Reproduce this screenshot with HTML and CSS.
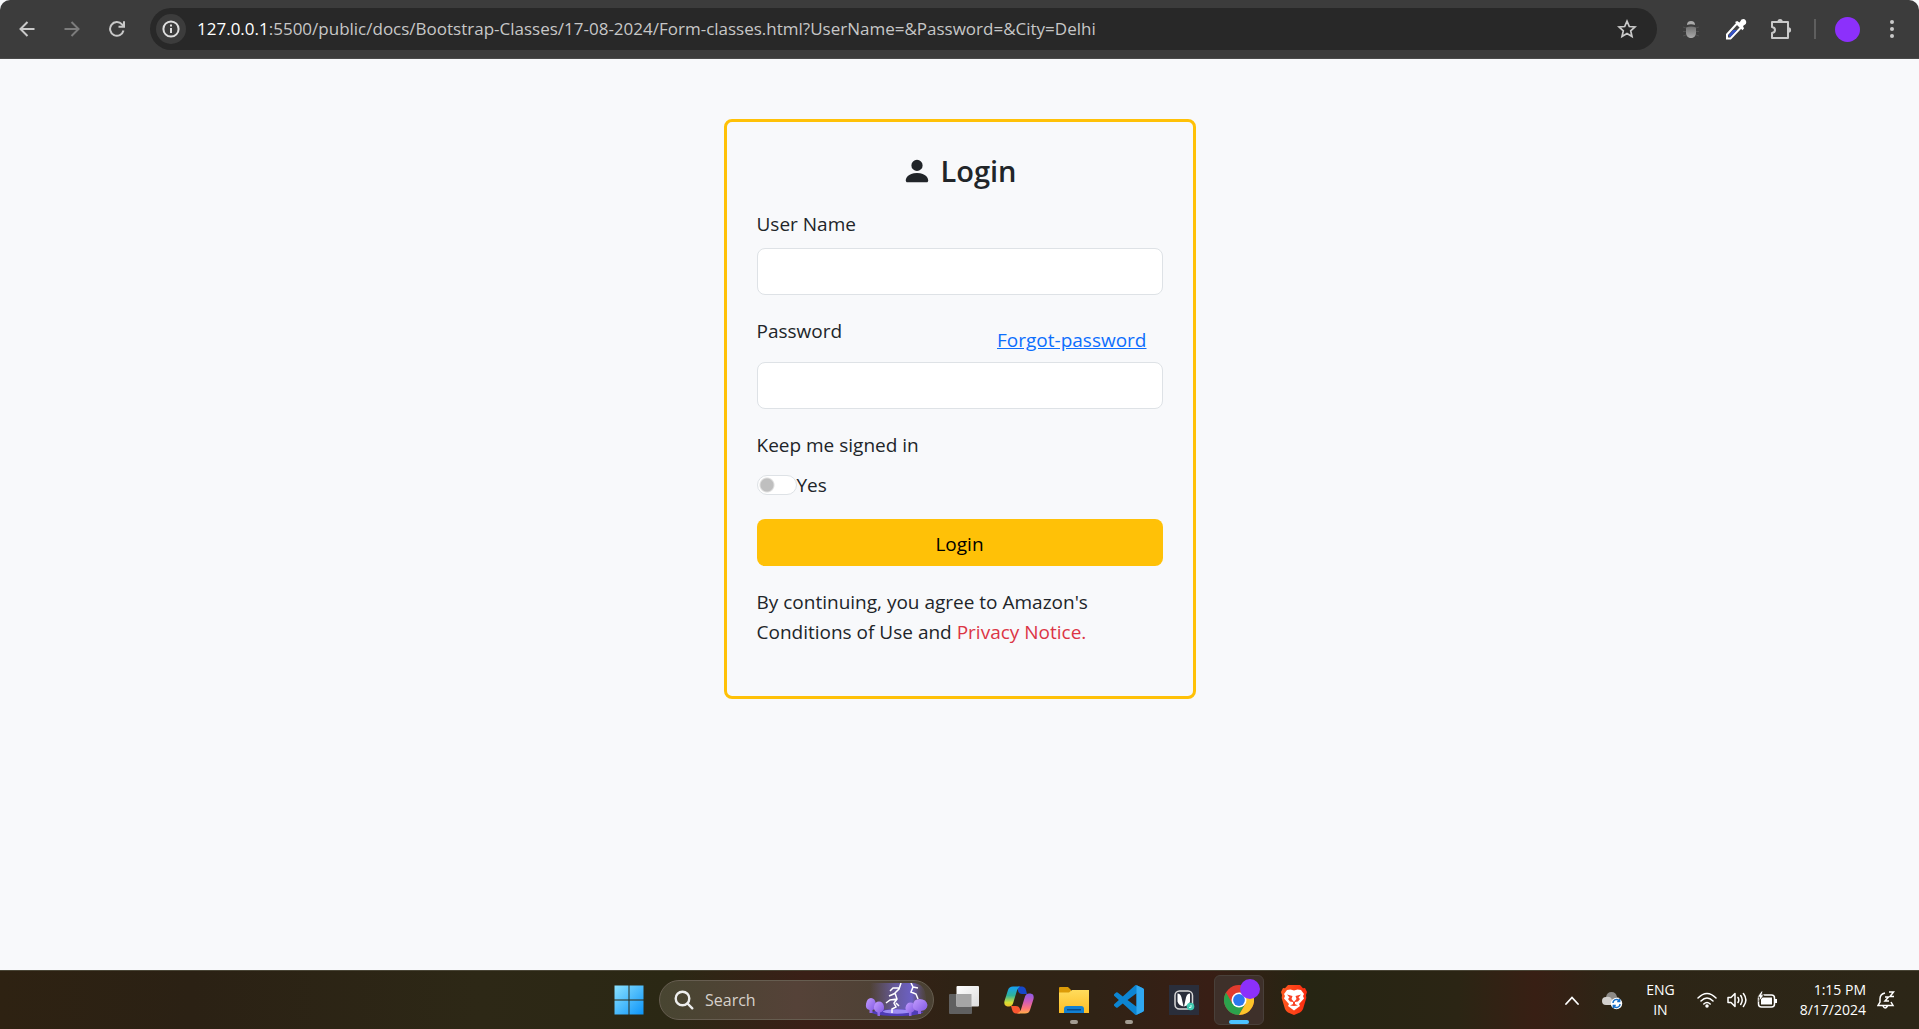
FILE: index.html
```html
<!DOCTYPE html>
<html lang="en">
<head>
<meta charset="utf-8">
<meta name="viewport" content="width=device-width, initial-scale=1">
<title>Form-classes</title>
<link rel="stylesheet" href="styles.css">
</head>
<body>
<header class="toolbar">
  <nav class="nav-buttons" aria-label="Navigation">
    <button class="icon-button" aria-label="Back"><svg width="16" height="16" viewBox="0 0 16 16" fill="none" stroke="#c9c9c9" stroke-width="2"><path d="M15.500 8H2M8.500 1L1.500 8l7 7"/></svg></button>
    <button class="icon-button" aria-label="Forward"><svg width="16" height="16" viewBox="0 0 16 16" fill="none" stroke="#7c7c7c" stroke-width="2"><path d="M.5 8H14M7.500 1l7 7-7 7"/></svg></button>
    <button class="icon-button" aria-label="Reload"><svg width="16" height="16" viewBox="0 0 16 16" fill="none" stroke="#c9c9c9" stroke-width="2"><path d="M14.500 9.500A6.800 6.800 0 1 1 13 3.400L15 5.600M15 .3v5.500H9.500"/></svg></button>
  </nav>
  <div class="address">
    <button class="site-info" aria-label="Site information"><svg width="18" height="18" viewBox="0 0 18 18" fill="none" stroke="#dedede" stroke-width="2"><circle cx="9" cy="9" r="7.600"/><path d="M9 8v5M9 4.600v2"/></svg></button>
    <div class="url"><span class="url-host">127.0.0.1</span>:5500/public/docs/Bootstrap-Classes/17-08-2024/Form-classes.html?UserName=&amp;Password=&amp;City=Delhi</div>
    <button class="icon-button" aria-label="Bookmark"><svg width="20" height="20" viewBox="0 0 20 20" fill="none" stroke="#c9c9c9" stroke-width="1.700"><path d="M10 2.200l2.300 5.300 5.700.5-4.300 3.800 1.300 5.700-5-3-5 3 1.300-5.700L2 8l5.700-.5z"/></svg></button>
  </div>
  <div class="extensions">
    <button class="icon-button" aria-label="Bug extension"><svg width="18" height="20" viewBox="0 0 18 20"><defs><linearGradient id="bug" x2="0" y2="1"><stop stop-color="#707070"/><stop offset="1" stop-color="#aaa"/></linearGradient></defs><path d="M1 8l3 1M1 12.500h3M1 17l3-1M17 8l-3 1M17 12.500h-3M17 17l-3-1" stroke="#505050"/><path d="M5 6q0-4 4-4t4 4q-4-1.600-8 0z" fill="#aaa"/><path d="M4 8.500q5-2 10 0v5c0 4-2.500 5.500-5 5.500s-5-1.500-5-5.500z" fill="url(#bug)"/></svg></button>
    <button class="icon-button" aria-label="Color picker"><svg width="22" height="22" viewBox="0 0 22 22"><path d="M2 20.500v-4L12 5.500l4 4-10.500 11z" fill="#454545" stroke="#fff" stroke-width="2"/><path d="M3.500 17.500l4.500-5.500h4l-7 7.500z" fill="#3552c9"/><path d="M10 4l2.200-1 2.300 1.500 2-3Q19 .2 20.500 2t.3 4L18 8l1 2.500-1.600 1.700z" fill="#fff"/></svg></button>
    <button class="icon-button" aria-label="Extensions"><svg width="22" height="22" viewBox="0 0 22 22"><path d="M2 4h16v16H2v-5q3-.5 3-3T2 9z" fill="none" stroke="#c9c9c9" stroke-width="2" stroke-linejoin="round"/><path d="M7.500 3.500a2.600 2.600 0 0 1 5.200 0zM18.500 9.300a2.600 2.600 0 0 1 0 5.200z" fill="#c9c9c9"/></svg></button>
    <span class="divider"></span>
    <button class="avatar" aria-label="Profile"></button>
    <button class="icon-button" aria-label="Menu"><svg width="6" height="20" viewBox="0 0 6 20" fill="#c9c9c9"><circle cx="3" cy="3" r="2"/><circle cx="3" cy="10" r="2"/><circle cx="3" cy="17" r="2"/></svg></button>
  </div>
</header>

<main class="page">
  <form class="login-card">
    <h1 class="title"><svg width="30" height="30" viewBox="0 0 16 16" fill="currentColor"><path d="M3 14s-1 0-1-1 1-4 6-4 6 3 6 4-1 1-1 1zm5-6a3 3 0 1 0 0-6 3 3 0 0 0 0 6"/></svg>Login</h1>
    <div class="field">
      <label class="label" for="username">User Name</label>
      <input class="input" id="username" name="UserName" type="text">
    </div>
    <div class="field">
      <div class="label-row">
        <label for="password">Password</label>
        <a class="forgot" href="#">Forgot-password</a>
      </div>
      <input class="input" id="password" name="Password" type="password">
    </div>
    <fieldset class="keep">
      <legend>Keep me signed in</legend>
      <div class="switch-row">
        <input class="switch" id="keep" type="checkbox" role="switch">
        <label for="keep">Yes</label>
      </div>
    </fieldset>
    <button class="submit" type="submit">Login</button>
    <p class="terms">By continuing, you agree to Amazon's Conditions of Use and <a class="privacy" href="#">Privacy Notice.</a></p>
  </form>
</main>

<footer class="taskbar">
  <div class="apps">
    <button class="app" aria-label="Start"><svg width="30" height="30" viewBox="0 0 30 30"><defs><linearGradient id="win" x2="1" y2="1"><stop stop-color="#8be2ff"/><stop offset="1" stop-color="#0c94f8"/></linearGradient></defs><path d="M0 0h14v14H0zM15 0h14v14H15zM0 15h14v14H0zM15 15h14v14H15z" transform="translate(.5 .5)" fill="url(#win)"/></svg></button>
    <label class="search">
      <svg width="20" height="20" viewBox="0 0 20 20" fill="none" stroke="#eee" stroke-width="2.400" stroke-linecap="round"><circle cx="8.500" cy="8.500" r="6.800"/><path d="M13.500 13.500l4.800 4.800"/></svg>
      <input class="search-input" type="text" placeholder="Search" aria-label="Search">
      <svg class="highlight" width="64" height="34" viewBox="0 0 64 34"><defs><linearGradient id="sky"><stop stop-color="#6a5c90" stop-opacity="0"/><stop offset=".45" stop-color="#665a9c"/><stop offset=".75" stop-color="#6c60c4"/><stop offset="1" stop-color="#5a4b65" stop-opacity=".2"/></linearGradient><linearGradient id="tree" x2="1" y2="1"><stop stop-color="#c39cff"/><stop offset="1" stop-color="#7a52de"/></linearGradient></defs><path d="M5 0h48q7 4 8 14v14H5z" fill="url(#sky)"/><path d="M5 29q13-3 27-3t27 3q-6 4-27 4T5 29z" fill="#4f3cb8"/><ellipse cx="32" cy="28.500" rx="14" ry="2.200" fill="#9d8cf4"/><g fill="url(#tree)"><path d="M4.500 30v-3Q0 26 1 21q1-6 5-6t5 6q1 5-3.500 6v3z"/><path d="M12.500 33v-3.500q-4-1.500-3.500-6 1-5 5-5t5 5q.5 5-4 6V33z"/><path d="M44 33v-3.500q-4-1-3.500-5 1-5 5-5t4.500 5q0 4-3.500 5V33z"/><path d="M53 31v-3q-6-1-5-6 .5-6 6.500-6 7 0 8 6 0 5-6.500 6v3z"/></g><path d="M36 0l-2 6-4 4 2 6-3 4 2 4-4 2v4M34 5l-6 0-3 3M31 10l-7 3M32 16l-7 1-4 3M31 20l3 3M46 0l2 4-2 5 5 2 2 5M48 4l5 1" fill="none" stroke="#fff" stroke-width="1.500"/></svg>
    </label>
    <button class="app" aria-label="Task view"><svg width="30" height="30" viewBox="0 0 30 30"><defs><linearGradient id="tv" x2="1" y2="1"><stop stop-color="#fff"/><stop offset="1" stop-color="#ddd"/></linearGradient></defs><rect y="9" width="23" height="20" rx="1" fill="#606060"/><rect x="7.500" y="1" width="22.500" height="20.500" rx="1" fill="url(#tv)"/><path d="M7.500 9H22.500v12.500H7.500z" fill="#a6a6a6"/></svg></button>
    <button class="app" aria-label="Copilot"><svg width="30" height="28" viewBox="0 0 30 28"><defs><linearGradient id="cp1" x2="0" y2="1"><stop stop-color="#16a0f5"/><stop offset=".45" stop-color="#2fb29b"/><stop offset=".8" stop-color="#d5df35"/><stop offset="1" stop-color="#f0be28"/></linearGradient><linearGradient id="cp2" x2="0" y2="1"><stop stop-color="#8a5ce8"/><stop offset=".4" stop-color="#d05cb8"/><stop offset=".75" stop-color="#ff7878"/><stop offset="1" stop-color="#ffad4a"/></linearGradient></defs><path d="M14 .5h4q3 0 4 3.500l1 4h-5q-3 0-4-3z" fill="#1648ca"/><path d="M9 .5h7q-2 1-3 4l-4 13q-1 3-4 3H3.500Q-.5 20 .5 15L4 4Q5 .5 9 .5z" fill="url(#cp1)"/><path d="M16 27.500h-4q-3 0-4-4L7 20h5q3 0 4 3z" fill="#fa5630"/><path d="M21 27.500h-8q3-1 4-4l4-13q1-3 4-3h1.500q4 .5 3 5.500L26 24q-1 3.500-5 3.500z" fill="url(#cp2)"/></svg></button>
    <button class="app app-open" aria-label="File Explorer"><svg width="30" height="28" viewBox="0 0 30 28"><defs><linearGradient id="fd" x2="0" y2="1"><stop stop-color="#ffdc5c"/><stop offset="1" stop-color="#fdbd25"/></linearGradient></defs><path d="M0 2q0-1 1-1h8l3 3v5H0z" fill="#dc9b08"/><path d="M0 6.500h10L13 4h17v23H0z" fill="url(#fd)"/><path d="M5 27v-4q0-3 3-3h14q3 0 3 3v4z" fill="#1280d2"/><rect x="8" y="23" width="14" height="1.500" fill="#064b89"/></svg></button>
    <button class="app app-open" aria-label="Visual Studio Code"><svg width="30" height="30" viewBox="0 0 24 24"><path fill="#0d85d2" d="M23.150 2.587L18.210.21a1.494 1.494 0 0 0-1.705.29l-9.460 8.630-4.120-3.128a.999.999 0 0 0-1.276.057L.327 7.261A1 1 0 0 0 .326 8.740L3.899 12 .326 15.260a1 1 0 0 0 .001 1.479L1.650 17.940a.999.999 0 0 0 1.276.057l4.120-3.128 9.460 8.630a1.492 1.492 0 0 0 1.704.29l4.942-2.377A1.500 1.500 0 0 0 24 20.060V3.939a1.500 1.500 0 0 0-.85-1.352zm-5.146 14.861L10.826 12l7.178-5.448v10.896z"/><path fill="#30a8f0" d="M18 .2l5.150 2.387A1.500 1.500 0 0 1 24 3.939V20.060a1.500 1.500 0 0 1-.85 1.352L18 23.800z"/></svg></button>
    <button class="app" aria-label="Capture tool"><svg width="30" height="30" viewBox="0 0 30 30"><path d="M0 0h30v30H0z" fill="#2a2e3b"/><rect x="6" y="6" width="17.500" height="18" rx="4.500" fill="none" stroke="#d8d8d8" stroke-width="1.500"/><path d="M8.500 8.500q3 0 4 4l2 9q-5-1-6-5zM21 8.500q-3 0-4 4l-2 9q5-1 6-5z" fill="#fff"/><circle cx="21.500" cy="21.500" r="3.800" fill="#3fc9b0"/><path d="M20 22.500h2v-2.500" fill="none" stroke="#d5fff5"/></svg></button>
    <button class="app app-active" aria-label="Google Chrome"><svg width="30" height="30" viewBox="0 0 30 30"><circle cx="15" cy="15" r="15" fill="#e33b2e"/><path d="M2 7.500A15 15 0 0 0 15 30l6.500-11.300L15 15l-6.500 3.700z" fill="#2ba24c"/><path d="M28 7.500A15 15 0 0 1 15 30l6.500-11.300L15 7.500z" fill="#fcc42a"/><circle cx="15" cy="15" r="7.500" fill="#fff"/><circle cx="15" cy="15" r="5.900" fill="#2b78ee"/></svg><span class="badge"></span></button>
    <button class="app" aria-label="Brave"><svg width="26" height="30" viewBox="0 0 26 30"><defs><linearGradient id="brave"><stop stop-color="#ff5a20"/><stop offset="1" stop-color="#fa2a10"/></linearGradient></defs><path d="M7 0h12l3 3.200 2-.2 2 4-1 3 .3 3-3.300 11q-1 2-3 3.500L13 30l-6-2.500Q5 26 4 24L.7 13 1 10 0 7l2-4 2 .2z" fill="url(#brave)"/><path d="M9.500 4.500L13 5.500l3.500-1L20 5l3 4-1 2 1 2.500-5 5.500 1 2-2 1.500-4 3-4-3L7 21l1-2-5-5.500L4 11 3 9l3-4z" fill="#fff"/><path d="M6 9.500l5.500 1.500-1 3 2.500 3 2.500-3-1-3L20 9.500l-2.500 3L19 14l-2 2.500-3 .5v2l3 1.500-4 .5-4-.5 3-1.500v-2l-3-.5L7 14l1.500-1.500z" fill="#fa4427"/></svg></button>
  </div>
  <div class="tray">
    <svg width="14" height="9" viewBox="0 0 14 9" fill="none" stroke="#fff" stroke-width="1.800" stroke-linecap="round"><path d="M1 8l6-6.500L13 8"/></svg>
    <svg class="cloud" width="22" height="20" viewBox="0 0 22 20"><path d="M5 7q1-5 5.500-5T16 7q3 0 3 4l-4 2H5z" fill="#8c8a86"/><path d="M5 15q-4 0-4-4t4-4q5-1 6 3l1 5z" fill="#d2d0cd"/><circle cx="15.500" cy="13.500" r="5.700" fill="#fff"/><path d="M12 13a3.600 3.600 0 0 1 6.500-2M18.700 9v2.500h-2.500M19 14a3.600 3.600 0 0 1-6.500 2M12.300 18v-2.500h2.500" fill="none" stroke="#1771c9" stroke-width="1.400"/></svg>
    <div class="language"><span>ENG</span><span>IN</span></div>
    <div class="status">
      <svg width="20" height="16" viewBox="0 0 20 16" fill="none" stroke="#fff" stroke-width="1.500" stroke-linecap="round"><path d="M1 6q9-9 18 0M4 9q6-6 12 0M6.800 12q3.200-3 6.400 0"/><circle cx="10" cy="14" r="1" fill="#fff"/></svg>
      <svg width="20" height="16" viewBox="0 0 20 16" fill="none" stroke="#fff" stroke-width="1.500" stroke-linecap="round" stroke-linejoin="round"><path d="M1 5.500h3l4-4v13l-4-4H1zM11 5.500q1.600 2.500 0 5M13.700 3.500q3 4.500 0 9M16.400 1.500q5 6.500 0 13"/></svg>
      <svg width="20" height="18" viewBox="0 0 20 18"><rect x="1.500" y="4" width="16" height="12" rx="3" fill="none" stroke="#fff" stroke-width="1.500"/><path d="M4 6.500h11v7H4z" fill="#fff"/><path d="M18 8h2v4h-2z" fill="#fff"/><path d="M4.500 0L.3 6h2.200L2 10.500 7 4H4.800L6 0z" fill="#fff" stroke="#2c2617" stroke-width=".8"/></svg>
    </div>
    <div class="clock"><time>1:15 PM</time><time>8/17/2024</time></div>
    <svg width="18" height="20" viewBox="0 0 18 20" fill="none" stroke="#fff" stroke-width="1.500"><path d="M8 3Q3 4 3 9v3l-2 3.500h15L14 12M6 16q2 4 4.500 0M8 7h3.500L8 11h4M12 2h4.500L13 6.500h4"/></svg>
  </div>
</footer>
</body>
</html>
```
FILE: styles.css
```css
* {
  box-sizing: border-box;
}

body {
  margin: 0;
  min-height: 100vh;
  display: flex;
  flex-direction: column;
  background: #f8f9fb;
  color: #212529;
  font-family: "Open Sans", "Noto Sans", sans-serif;
  font-size: 19px;
  line-height: 30px;
}

button,
input {
  font: inherit;
  margin: 0;
}

svg {
  display: block;
  flex: none;
}

/* Browser toolbar */

.toolbar {
  display: flex;
  align-items: center;
  height: 59px;
  padding: 0 12px;
  background: #3c3c3c;
  border-bottom: 1px solid #4a4a4a;
  border-radius: 10px 10px 0 0;
}

.nav-buttons {
  display: flex;
  gap: 15px;
  margin-right: 18px;
}

.icon-button {
  display: flex;
  align-items: center;
  justify-content: center;
  width: 30px;
  height: 30px;
  padding: 0;
  border: 0;
  background: none;
}

.address {
  flex: 1;
  display: flex;
  align-items: center;
  height: 42px;
  padding: 0 15px 0 6px;
  border-radius: 21px;
  background: #282828;
}

.site-info {
  display: flex;
  align-items: center;
  justify-content: center;
  width: 30px;
  height: 30px;
  padding: 0;
  border: 0;
  border-radius: 50%;
  background: #3c3c3c;
}

.url {
  flex: 1;
  margin-left: 11px;
  color: #c7c7c7;
  font-size: 17px;
  white-space: nowrap;
}

.url-host {
  color: #fff;
}

.extensions {
  display: flex;
  align-items: center;
  gap: 15px;
  margin-left: 19px;
}

.divider {
  width: 2px;
  height: 20px;
  margin: 0 4px 0 3px;
  background: #5e5e5e;
}

.avatar {
  width: 25px;
  height: 25px;
  margin-right: 2px;
  padding: 0;
  border: 0;
  border-radius: 50%;
  background: #8c30fb;
}

/* Login page */

.page {
  flex: 1;
  padding: 60px 16px;
}

.login-card {
  max-width: 472px;
  margin: 0 auto;
  padding: 30px;
  border: 3px solid #ffc107;
  border-radius: 8px;
}

.title {
  display: flex;
  align-items: center;
  justify-content: center;
  gap: 8px;
  margin: 0 0 19px;
  font-size: 29px;
  font-weight: 600;
  line-height: 38px;
}

.field {
  display: flex;
  flex-direction: column;
  margin-bottom: 21px;
}

.label {
  margin-bottom: 9px;
}

.label-row {
  display: flex;
  justify-content: space-between;
}

.forgot {
  padding: 9px 16px 7px;
  color: #0d6efd;
}

.input {
  width: 100%;
  height: 47px;
  padding: 8px 15px;
  border: 1px solid #dee2e6;
  border-radius: 8px;
  background: #fff;
}

.keep {
  margin: 0 0 19px;
  padding: 0;
  border: 0;
}

.keep legend {
  padding: 0;
  margin-bottom: 10px;
}

.switch-row {
  display: flex;
  align-items: center;
}

.switch {
  appearance: none;
  width: 40px;
  height: 20px;
  border: 1px solid #dee2e6;
  border-radius: 10px;
  background: radial-gradient(circle at 9px 9px, #bfbfbf 6px, #fff 8px);
}

.submit {
  display: block;
  width: 100%;
  height: 47px;
  padding: 2px 0 0;
  border: 0;
  border-radius: 8px;
  background: #ffc107;
  color: #000;
}

.terms {
  margin: 21px 0 19px;
}

.privacy {
  color: #dc3545;
  text-decoration: none;
}

/* Taskbar */

.taskbar {
  display: grid;
  grid-template-columns: 1fr auto 1fr;
  align-items: center;
  height: 59px;
  border-top: 1px solid #494536;
  background: linear-gradient(90deg, #2e2212, #2b2114 10%, #2d2816 25%, #2b2814 35%, #3a1f17 42%, #2f2315 50%, #302315 57%, #381e15 63%, #262513 68%, #2b2514 76%, #381f14 80%, #2d2516 84%, #2c2617);
  color: #fff;
  font-size: 14px;
  line-height: 20px;
}

.apps {
  grid-column: 2;
  display: flex;
  align-items: center;
  gap: 5px;
  padding-left: 4px;
}

.app {
  position: relative;
  display: flex;
  align-items: center;
  justify-content: center;
  width: 50px;
  height: 50px;
  padding: 0;
  border: 0;
  border-radius: 6px;
  background: none;
}

.app-open::after,
.app-active::after {
  content: "";
  position: absolute;
  bottom: 1px;
  width: 8px;
  height: 4px;
  border-radius: 2px;
  background: #a39c92;
}

.app-active {
  background: #3e302a;
  border: 1px solid #49403a;
}

.app-active::after {
  bottom: 0;
  width: 20px;
  background: #4cc2ff;
}

.badge {
  position: absolute;
  top: 3px;
  right: 3px;
  width: 20px;
  height: 20px;
  border-radius: 50%;
  background: #8c30fb;
}

.search {
  display: flex;
  align-items: center;
  width: 275px;
  height: 40px;
  padding: 0 4px 0 14px;
  border: 1px solid #665d50;
  border-radius: 20px;
  background: linear-gradient(90deg, #484531, #554238 50%, #4a4133);
}

.search-input {
  flex: 1;
  min-width: 0;
  padding: 0 0 0 11px;
  border: 0;
  background: none;
  color: #fff;
  font-size: 16px;
}

.search-input::placeholder {
  color: #d6d1cb;
  opacity: 1;
}

.highlight {
  border-radius: 0 17px 17px 0;
}

.tray {
  justify-self: end;
  display: flex;
  align-items: center;
  padding-right: 24px;
}

.cloud {
  margin: 0 23px 0 22px;
}

.language {
  display: flex;
  flex-direction: column;
  align-items: center;
  margin-right: 22px;
}

.status {
  display: flex;
  align-items: center;
  gap: 10px;
}

.clock {
  display: flex;
  flex-direction: column;
  align-items: flex-end;
  margin: 0 11px 0 23px;
}
```
